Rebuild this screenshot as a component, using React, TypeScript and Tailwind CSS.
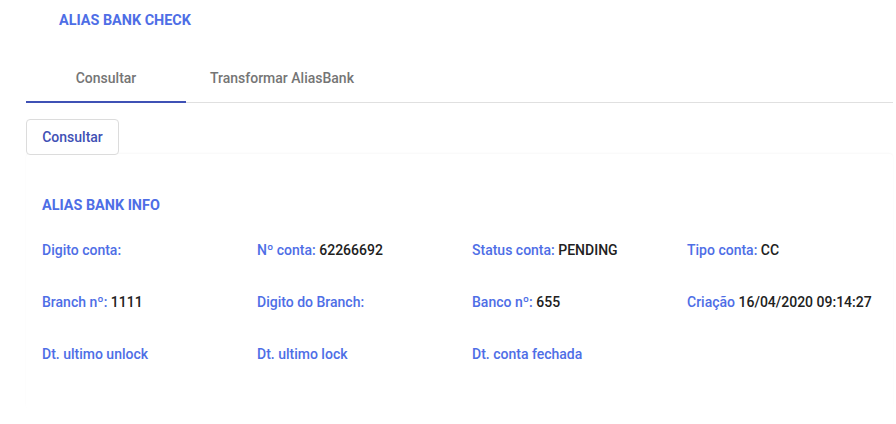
import React from "react";

const rows: [string, string][][] = [
  [
    ["Digito conta:", ""],
    ["Nº conta:", "62266692"],
    ["Status conta:", "PENDING"],
    ["Tipo conta:", "CC"],
  ],
  [
    ["Branch nº:", "1111"],
    ["Digito do Branch:", ""],
    ["Banco nº:", "655"],
    ["Criação", "16/04/2020 09:14:27"],
  ],
  [
    ["Dt. ultimo unlock", ""],
    ["Dt. ultimo lock", ""],
    ["Dt. conta fechada", ""],
    ["", ""],
  ],
];

export default function App() {
  return (
    <div
      className="w-[896px] h-[424px] bg-white overflow-hidden text-[14px]"
      style={{ fontFamily: "Roboto, 'Liberation Sans', sans-serif" }}
    >
      <div className="pl-[59px] pt-[13px] leading-[16px] text-[14.4px] font-bold text-[#4e6ee6]">
        ALIAS BANK CHECK
      </div>
      <div className="ml-[26px] mr-[3px] mt-[26px]">
        <div className="flex h-[48px] border-b border-[#e0e0e0]">
          <div className="relative w-[160px] flex items-center justify-center font-medium text-[#757575]">
            Consultar
            <div className="absolute left-0 right-0 bottom-[-1px] h-[2px] bg-[#3f51b5]" />
          </div>
          <div className="px-[24px] flex items-center justify-center font-medium text-[#757575]">
            Transformar AliasBank
          </div>
        </div>
        <div className="mt-[16px]">
          <button className="h-[36px] w-[93px] rounded-[4px] border border-[#dcdcdc] bg-white font-medium text-[#3f51b5]">
            Consultar
          </button>
        </div>
        <div className="-mt-px h-[255px] rounded-[4px] bg-white shadow-[0_-1px_2px_rgba(0,0,0,0.03)] pl-[16px] pt-[42px]">
          <div className="leading-[20px] text-[14.4px] font-bold text-[#4e6ee6]">ALIAS BANK INFO</div>
          <div className="mt-[24px] flex flex-col gap-[32px]">
            {rows.map((row, i) => (
              <div key={i} className="grid grid-cols-[215px_215px_215px_1fr] leading-[20px] font-medium">
                {row.map(([l, v], j) => (
                  <div key={j} className="whitespace-nowrap">
                    <span className="text-[#4e6ee6]">{l}</span>
                    {v && <span className="text-[#212121]"> {v}</span>}
                  </div>
                ))}
              </div>
            ))}
          </div>
        </div>
      </div>
    </div>
  );
}
